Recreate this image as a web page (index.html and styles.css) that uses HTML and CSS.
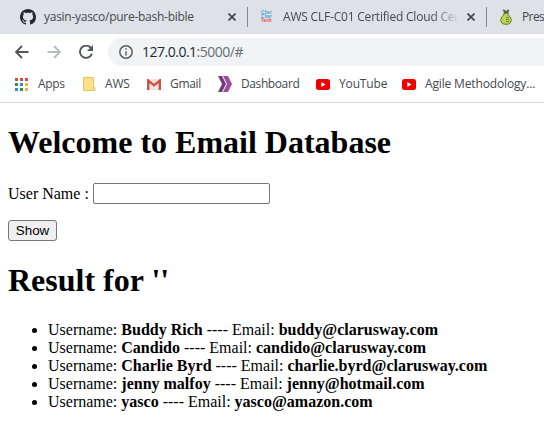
FILE: index.html
```html
<!DOCTYPE html>
<html lang="en">
<head>
<meta charset="utf-8">
<title>Email Database</title>
<link rel="stylesheet" href="styles.css">
</head>
<body>
<header class="browser">
  <div class="tabs">
    <div class="tab tab-github">
      <svg class="icon16" viewBox="0 0 16 16"><path fill="#24292e" d="M8 0C3.58 0 0 3.58 0 8c0 3.54 2.29 6.53 5.47 7.59.4.07.55-.17.55-.38 0-.19-.01-.82-.01-1.49-2.01.37-2.53-.49-2.69-.94-.09-.23-.48-.94-.82-1.13-.28-.15-.68-.52-.01-.53.63-.01 1.08.58 1.23.82.72 1.21 1.87.87 2.33.66.07-.52.28-.87.51-1.07-1.78-.2-3.64-.89-3.64-3.95 0-.87.31-1.59.82-2.15-.08-.2-.36-1.02.08-2.12 0 0 .67-.21 2.2.82.64-.18 1.32-.27 2-.27s1.36.09 2 .27c1.53-1.04 2.2-.82 2.2-.82.44 1.1.16 1.92.08 2.12.51.56.82 1.27.82 2.15 0 3.07-1.87 3.75-3.65 3.95.29.25.54.73.54 1.48 0 1.07-.01 1.93-.01 2.2 0 .21.15.46.55.38A8.01 8.01 0 0 0 16 8c0-4.42-3.58-8-8-8z"/></svg>
      <span class="tab-title title-github">yasin-yasco/pure-bash-bible</span>
      <svg class="close" viewBox="0 0 8 8"><path d="M.5.5l7 7M7.5.5l-7 7"/></svg>
    </div>
    <div class="tab tab-aws">
      <span class="cher"><span>Cher</span><span>Cher</span><span class="tech">Tech</span></span>
      <span class="tab-title title-aws">AWS CLF-C01 Certified Cloud Cer</span>
      <svg class="close" viewBox="0 0 8 8"><path d="M.5.5l7 7M7.5.5l-7 7"/></svg>
    </div>
    <div class="tab tab-pres">
      <svg class="pear" viewBox="0 0 12 16"><path d="M4.2 4.2C4 6.8.8 8 .8 11.1.8 14 3 15.3 6 15.3s5.2-1.3 5.2-4.2C11.2 8 8 6.8 7.8 4.2Z" fill="#b9d94b" stroke="#62733c"/><path d="M2.5.8h2.2L6 2.100 7.500.8h2L8.600 2.700v1.500H3.700V2.700Z" fill="#52683e"/><path d="M6 8.500h3M6 10.500h3M6 12.500h3" stroke="#64783b" stroke-width=".9"/></svg>
      <span class="tab-title title-pres">Pres</span>
    </div>
  </div>
  <div class="toolbar">
    <svg class="nav" viewBox="0 0 14 14"><path d="M13.500 7H1.200M7 1L1 7l6 6" stroke="#54575b"/></svg>
    <svg class="nav" viewBox="0 0 14 14"><path d="M.5 7h12.300M7 1l6 6-6 6" stroke="#b9bbbd"/></svg>
    <svg class="nav" viewBox="0 0 14 14"><path d="M11.800 2.900A6.100 6.100 0 1 0 12.900 8.600" stroke="#54575b"/><path d="M14 0v6H8Z" fill="#54575b"/></svg>
    <div class="address">
      <svg class="info" viewBox="0 0 14 14"><circle cx="7" cy="7" r="6.200"/><path d="M7 6.200v4.300M7 3.300v1.500"/></svg>
      <span class="url">127.0.0.1<span class="path">:5000/#</span></span>
    </div>
  </div>
  <nav class="bookmarks">
    <span class="bm bm-apps"><svg width="13" height="13" viewBox="0 0 13 13"><path d="M0 0h3v3H0zM5 0h3v3H5zM10 0h3v3h-3z" fill="#d94b3d"/><path d="M0 5h3v3H0z" fill="#299657"/><path d="M5 5h3v3H5zM0 10h3v3H0z" fill="#3989d8"/><path d="M5 10h3v3H5z" fill="#289756"/><path d="M10 5h3v3h-3zM10 10h3v3h-3z" fill="#efb52e"/></svg><span>Apps</span></span>
    <span class="bm bm-folder"><svg width="13" height="14" viewBox="0 0 13 14"><path d="M.5.5h10v9.500l1.500.7v2.800H.5Z" fill="#ffe08a" stroke="#e8c565"/><path d="M10.500 10v3.500" stroke="#e8c565"/></svg><span>AWS</span></span>
    <span class="bm bm-gmail"><svg width="14" height="11" viewBox="0 0 14 11"><path d="M0 0h14v11H0z" fill="#e9e5e2"/><path d="M1.200 11V1.500L7 6.300l5.800-4.800V11" fill="none" stroke="#d54b3e" stroke-width="2.300"/></svg><span>Gmail</span></span>
    <span class="bm bm-dash"><svg width="14" height="16" viewBox="0 0 14 16"><path d="M0 0h4l4 8-4 8H0l4-8Z" fill="#733c78"/><path d="M5 0h5l4 8-4 8H5l4-8Z" fill="#a04d9d"/></svg><span>Dashboard</span></span>
    <span class="bm bm-youtube"><svg width="14" height="11" viewBox="0 0 14 11"><rect width="14" height="11" rx="2.500" fill="#f00000"/><path d="M5.300 3v5L9.500 5.500Z" fill="#fff"/></svg><span>YouTube</span></span>
    <span class="bm bm-agile"><svg width="14" height="11" viewBox="0 0 14 11"><rect width="14" height="11" rx="2.500" fill="#f00000"/><path d="M5.300 3v5L9.500 5.500Z" fill="#fff"/></svg><span>Agile Methodology...</span></span>
  </nav>
</header>
<main>
  <h1>Welcome to Email Database</h1>
  <form>
    <div class="field"><label for="username">User Name :</label><input id="username" type="text"></div>
    <button type="button">Show</button>
  </form>
  <h1>Result for ''</h1>
  <ul>
    <li>Username: <b>Buddy Rich</b> ---- Email: <b>buddy@clarusway.com</b></li>
    <li>Username: <b>Candido</b> ---- Email: <b>candido@clarusway.com</b></li>
    <li>Username: <b>Charlie Byrd</b> ---- Email: <b>charlie.byrd@clarusway.com</b></li>
    <li>Username: <b>jenny malfoy</b> ---- Email: <b>jenny@hotmail.com</b></li>
    <li>Username: <b>yasco</b> ---- Email: <b>yasco@amazon.com</b></li>
  </ul>
</main>
</body>
</html>
```
FILE: styles.css
```css
* { box-sizing: border-box; }
body { margin: 0; width: 544px; height: 430px; overflow: hidden; background: #fff; color: #000; font: 16px/18px "Liberation Serif", serif; }
svg { display: block; flex: none; }
.browser { height: 103px; border-bottom: 1px solid #d5d6d8; font: 12px/16px "Open Sans", sans-serif; color: #45494d; }
.tabs { height: 34px; display: flex; align-items: center; background: #dee1e6; overflow: hidden; }
.tab { display: flex; align-items: center; height: 20px; flex: none; border-right: 1px solid #85888c; }
.tab-github { width: 248px; padding-left: 20px; }
.tab-aws { width: 239px; padding-left: 13px; }
.tab-pres { width: 57px; padding-left: 13px; border: 0; }
.icon16 { width: 16px; height: 16px; }
.tab-title { white-space: nowrap; flex: none; }
.title-github { width: 175px; margin: 0 9px 0 8px; letter-spacing: -.27px; }
.title-aws { width: 174px; margin: 0 10px 0 10px; letter-spacing: -.2px; -webkit-mask-image: linear-gradient(90deg, #000 148px, transparent 178px); mask-image: linear-gradient(90deg, #000 148px, transparent 178px); }
.title-pres { margin-left: 10px; letter-spacing: -.6px; }
.close { width: 8px; height: 8px; }
.close path { stroke: #3e4246; stroke-width: 1.6; fill: none; }
.cher { width: 12px; display: flex; flex-direction: column; font: bold 4.5px/4px "Liberation Sans", sans-serif; letter-spacing: .15px; color: #3da7e0; }
.cher span { height: 4px; }
.cher .tech { color: #e84b40; }
.pear { width: 12px; height: 16px; }
.toolbar { height: 36px; display: flex; align-items: center; padding-left: 15px; gap: 18px; }
.nav { width: 14px; height: 14px; }
.nav path:first-child { stroke-width: 1.9; fill: none; }
.address { height: 28px; flex: 1; margin-left: -3px; padding-left: 11px; border-radius: 14px 0 0 14px; background: #f1f3f4; display: flex; align-items: center; gap: 9px; }
.info { width: 14px; height: 14px; fill: none; stroke: #5b5f63; stroke-width: 1.5; }
.url { font-size: 14px; letter-spacing: -.5px; color: #25282c; }
.path { color: #696d71; }
.bookmarks { height: 28px; display: flex; align-items: center; padding-left: 15px; white-space: nowrap; }
.bm { display: flex; align-items: center; flex: none; letter-spacing: -.15px; }
.bm-apps { width: 68px; gap: 10px; letter-spacing: -.3px; }
.bm-folder { width: 64px; gap: 9px; }
.bm-gmail { width: 71px; gap: 9px; letter-spacing: -.3px; }
.bm-dash { width: 98px; gap: 9px; letter-spacing: -.4px; }
.bm-youtube { width: 86px; gap: 9px; }
.bm-agile { gap: 9px; }
main { padding: 21px 8px 0; }
h1 { margin: 0; font-size: 32px; line-height: 37px; }
form { padding: 22px 0 21px; }
.field { display: flex; align-items: center; gap: 4px; height: 21px; }
input { width: 177px; height: 21px; padding: 1px 2px; border: 1px solid #767676; border-radius: 2px; background: #fff; }
button { display: block; margin-top: 16px; width: 49px; height: 21px; padding: 0; border: 1px solid #767676; border-radius: 3px; background: #efefef; color: #000; font: 13.333px/17px "Liberation Sans", sans-serif; }
ul { margin: 22px 0 0; padding-left: 40px; }
```
